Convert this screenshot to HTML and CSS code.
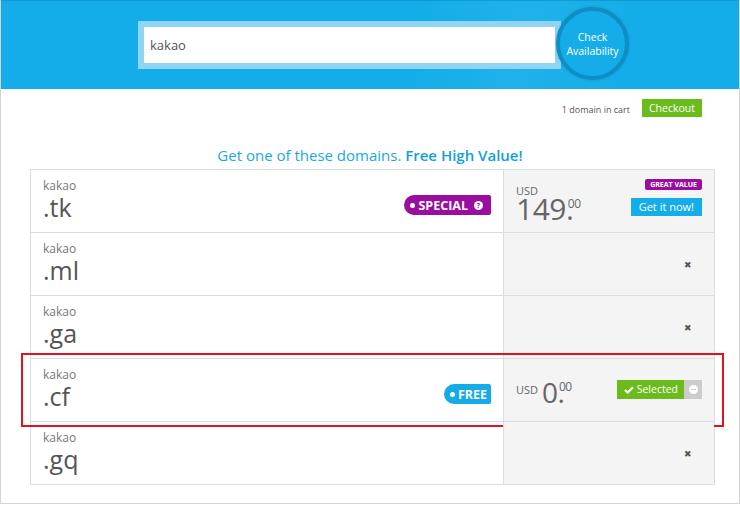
FILE: index.html
```html
<!DOCTYPE html>
<html>
<head>
    <link rel="stylesheet" href="styles.css">
</head>
<body>
<div class="page">
    <div class="search-bar">
        <div class="search-box">
            <div class="search-input">kakao</div>
        </div>
        <div class="check-btn">Check<br>Availability</div>
    </div>

    <div class="cart-line">
        <span class="cart-count">1 domain in cart</span>
        <span class="checkout-btn">Checkout</span>
    </div>

    <h2 class="offer-title">Get one of these domains. <strong>Free High Value!</strong></h2>

    <div class="domain-table">
        <div class="domain-row">
            <div class="domain-cell">
                <div class="domain-name">
                    <div class="domain-sld">kakao</div>
                    <div class="domain-tld">.tk</div>
                </div>
                <span class="badge badge-special"><i class="badge-dot"></i>SPECIAL <i class="badge-help">?</i></span>
            </div>
            <div class="price-cell">
                <div class="price price-stacked">
                    <span class="currency">USD</span>
                    <span class="amount">149<span class="dot">.</span><sup class="cents">00</sup></span>
                </div>
                <div class="price-actions">
                    <span class="great-value">GREAT VALUE</span>
                    <span class="get-btn">Get it now!</span>
                </div>
            </div>
        </div>

        <div class="domain-row">
            <div class="domain-cell">
                <div class="domain-name">
                    <div class="domain-sld">kakao</div>
                    <div class="domain-tld">.ml</div>
                </div>
            </div>
            <div class="price-cell price-cell--empty">
                <span class="unavailable">&#x2716;</span>
            </div>
        </div>

        <div class="domain-row">
            <div class="domain-cell">
                <div class="domain-name">
                    <div class="domain-sld">kakao</div>
                    <div class="domain-tld">.ga</div>
                </div>
            </div>
            <div class="price-cell price-cell--empty">
                <span class="unavailable">&#x2716;</span>
            </div>
        </div>

        <div class="domain-row is-highlighted">
            <div class="domain-cell">
                <div class="domain-name">
                    <div class="domain-sld">kakao</div>
                    <div class="domain-tld">.cf</div>
                </div>
                <span class="badge badge-free"><i class="badge-dot"></i>FREE</span>
            </div>
            <div class="price-cell">
                <div class="price price-inline">
                    <span class="currency">USD</span>
                    <span class="amount">0<span class="dot">.</span><sup class="cents">00</sup></span>
                </div>
                <div class="selected-group">
                    <span class="selected-btn">
                        <svg width="10" height="8" viewBox="0 0 11 9"><path d="M1 4.6 L4 7.4 L10 1.4" fill="none" stroke="#fff" stroke-width="2.4"/></svg>
                        Selected
                    </span>
                    <span class="remove-btn"><i class="remove-icon"></i></span>
                </div>
            </div>
            <div class="highlight-frame"></div>
        </div>

        <div class="domain-row">
            <div class="domain-cell">
                <div class="domain-name">
                    <div class="domain-sld">kakao</div>
                    <div class="domain-tld">.gq</div>
                </div>
            </div>
            <div class="price-cell price-cell--empty">
                <span class="unavailable">&#x2716;</span>
            </div>
        </div>
    </div>
</div>
</body>
</html>
```

FILE: styles.css
```css
html, body {
    margin: 0;
    padding: 0;
    background-color: #ffffff;
    font-family: "Open Sans", "Liberation Sans", sans-serif;
    color: #555555;
}

.page {
    width: 738px;
    height: 503px;
    border: 1px solid #d4d4d4;
    border-top: none;
    overflow: hidden;
}

.search-bar {
    position: relative;
    height: 89px;
    background-color: #14ade9;
    background-image: linear-gradient(100deg, rgba(255, 255, 255, 0) 55%, rgba(255, 255, 255, 0.05) 70%, rgba(255, 255, 255, 0) 85%);
    border-top: 1px solid #0f9ad1;
    box-sizing: border-box;
    padding: 20px 0 0 137px;
}

.search-box {
    width: 411px;
    padding: 6px;
    background-color: #8fd4f3;
}

.search-input {
    height: 36px;
    line-height: 36px;
    padding-left: 6px;
    background-color: #ffffff;
    font-size: 13px;
    color: #555555;
}

.check-btn {
    position: absolute;
    left: 555px;
    top: 6px;
    width: 65px;
    height: 65px;
    border: 4px solid #0c8fc4;
    border-radius: 50%;
    background-color: #14ade9;
    box-shadow: 0 0 3px rgba(0, 0, 0, 0.15);
    color: #ffffff;
    font-size: 10.5px;
    line-height: 14px;
    display: flex;
    align-items: center;
    justify-content: center;
    text-align: center;
}

.cart-line {
    display: flex;
    justify-content: flex-end;
    align-items: center;
    gap: 12px;
    padding: 10px 37px 0 0;
}

.cart-count {
    font-size: 9px;
    color: #555555;
    padding-top: 3px;
}

.checkout-btn {
    background-color: #6cbb1d;
    color: #ffffff;
    font-size: 10.5px;
    line-height: 18px;
    padding: 0 7px;
}

.offer-title {
    margin: 28px 0 4px;
    text-align: center;
    font-size: 15px;
    font-weight: normal;
    color: #21a7de;
}

.offer-title strong {
    font-weight: 600;
    color: #139fd8;
}

.domain-table {
    margin-left: 29px;
    width: 683px;
    border: 1px solid #dddddd;
    border-bottom: none;
}

.domain-row {
    position: relative;
    display: flex;
    height: 62px;
    border-bottom: 1px solid #dddddd;
}

.domain-cell {
    width: 473px;
    border-right: 1px solid #dddddd;
    display: flex;
    justify-content: space-between;
    align-items: flex-end;
    padding: 0 12px 17px 12px;
    box-sizing: border-box;
}

.domain-name {
    align-self: flex-start;
    padding-top: 9px;
}

.domain-sld {
    font-size: 12px;
    line-height: 14px;
    color: #777777;
}

.domain-tld {
    font-size: 25px;
    line-height: 28px;
    color: #555555;
}

.badge {
    display: inline-flex;
    align-items: center;
    height: 20px;
    padding: 0 8px 0 6px;
    border-radius: 10px 2px 2px 10px;
    color: #ffffff;
    font-size: 12.5px;
    font-weight: 700;
    font-style: normal;
}

.badge-special {
    background-color: #9a0d9f;
}

.badge-free {
    background-color: #15abe6;
    padding-right: 4px;
}

.badge-dot {
    width: 5px;
    height: 5px;
    border-radius: 50%;
    background-color: #ffffff;
    margin-right: 3px;
}

.badge-help {
    width: 9px;
    height: 9px;
    border-radius: 50%;
    background-color: #ffffff;
    color: #9a0d9f;
    font-size: 7px;
    font-style: normal;
    line-height: 9px;
    text-align: center;
    margin-left: 6px;
}

.price-cell {
    flex: 1;
    background-color: #f4f4f4;
    display: flex;
    justify-content: space-between;
    align-items: flex-start;
    padding: 8px 12px 0 12px;
}

.price-cell--empty {
    justify-content: flex-end;
    align-items: center;
    padding: 0 22px 0 0;
}

.unavailable {
    font-size: 9px;
    color: #555555;
}

.price {
    color: #666666;
}

.price .currency {
    font-size: 11px;
    line-height: 11px;
}

.price .amount {
    font-size: 30px;
    line-height: 26px;
    letter-spacing: -0.5px;
}

.price .dot {
    letter-spacing: 0;
    margin-right: -6px;
}

.price .cents {
    font-size: 12px;
    vertical-align: top;
    line-height: 12px;
    position: relative;
    top: 2px;
}

.price-stacked {
    display: flex;
    flex-direction: column;
    padding-top: 7px;
}

.price-inline {
    display: flex;
    align-items: flex-start;
    gap: 4px;
    padding-top: 12px;
}

.price-inline .amount {
    font-size: 28px;
}

.price-inline .currency {
    padding-top: 5px;
}

.price-actions {
    display: flex;
    flex-direction: column;
    align-items: flex-end;
    gap: 8px;
    padding-top: 1px;
}

.great-value {
    background-color: #9a0d9f;
    color: #ffffff;
    font-size: 7px;
    font-weight: 700;
    line-height: 11px;
    padding: 0 5px;
    border-radius: 2px;
}

.get-btn {
    background-color: #14ade9;
    color: #ffffff;
    font-size: 11px;
    line-height: 18px;
    padding: 0 8px;
}

.selected-group {
    display: flex;
    margin-top: 13px;
}

.selected-btn {
    display: flex;
    align-items: center;
    gap: 3px;
    background-color: #6cbb1d;
    color: #ffffff;
    font-size: 10.5px;
    line-height: 19px;
    padding: 0 6px 0 7px;
}

.remove-btn {
    width: 18px;
    height: 19px;
    background-color: #cccccc;
    display: flex;
    align-items: center;
    justify-content: center;
}

.remove-icon {
    position: relative;
    width: 9px;
    height: 9px;
    border-radius: 50%;
    background-color: #ffffff;
}

.remove-icon::after {
    content: "";
    position: absolute;
    left: 2px;
    top: 4px;
    width: 5px;
    height: 1px;
    background-color: #cccccc;
}

.highlight-frame {
    position: absolute;
    left: -10px;
    right: -10px;
    top: -6px;
    bottom: -6px;
    border: 2px solid #e1121c;
    pointer-events: none;
}
```
